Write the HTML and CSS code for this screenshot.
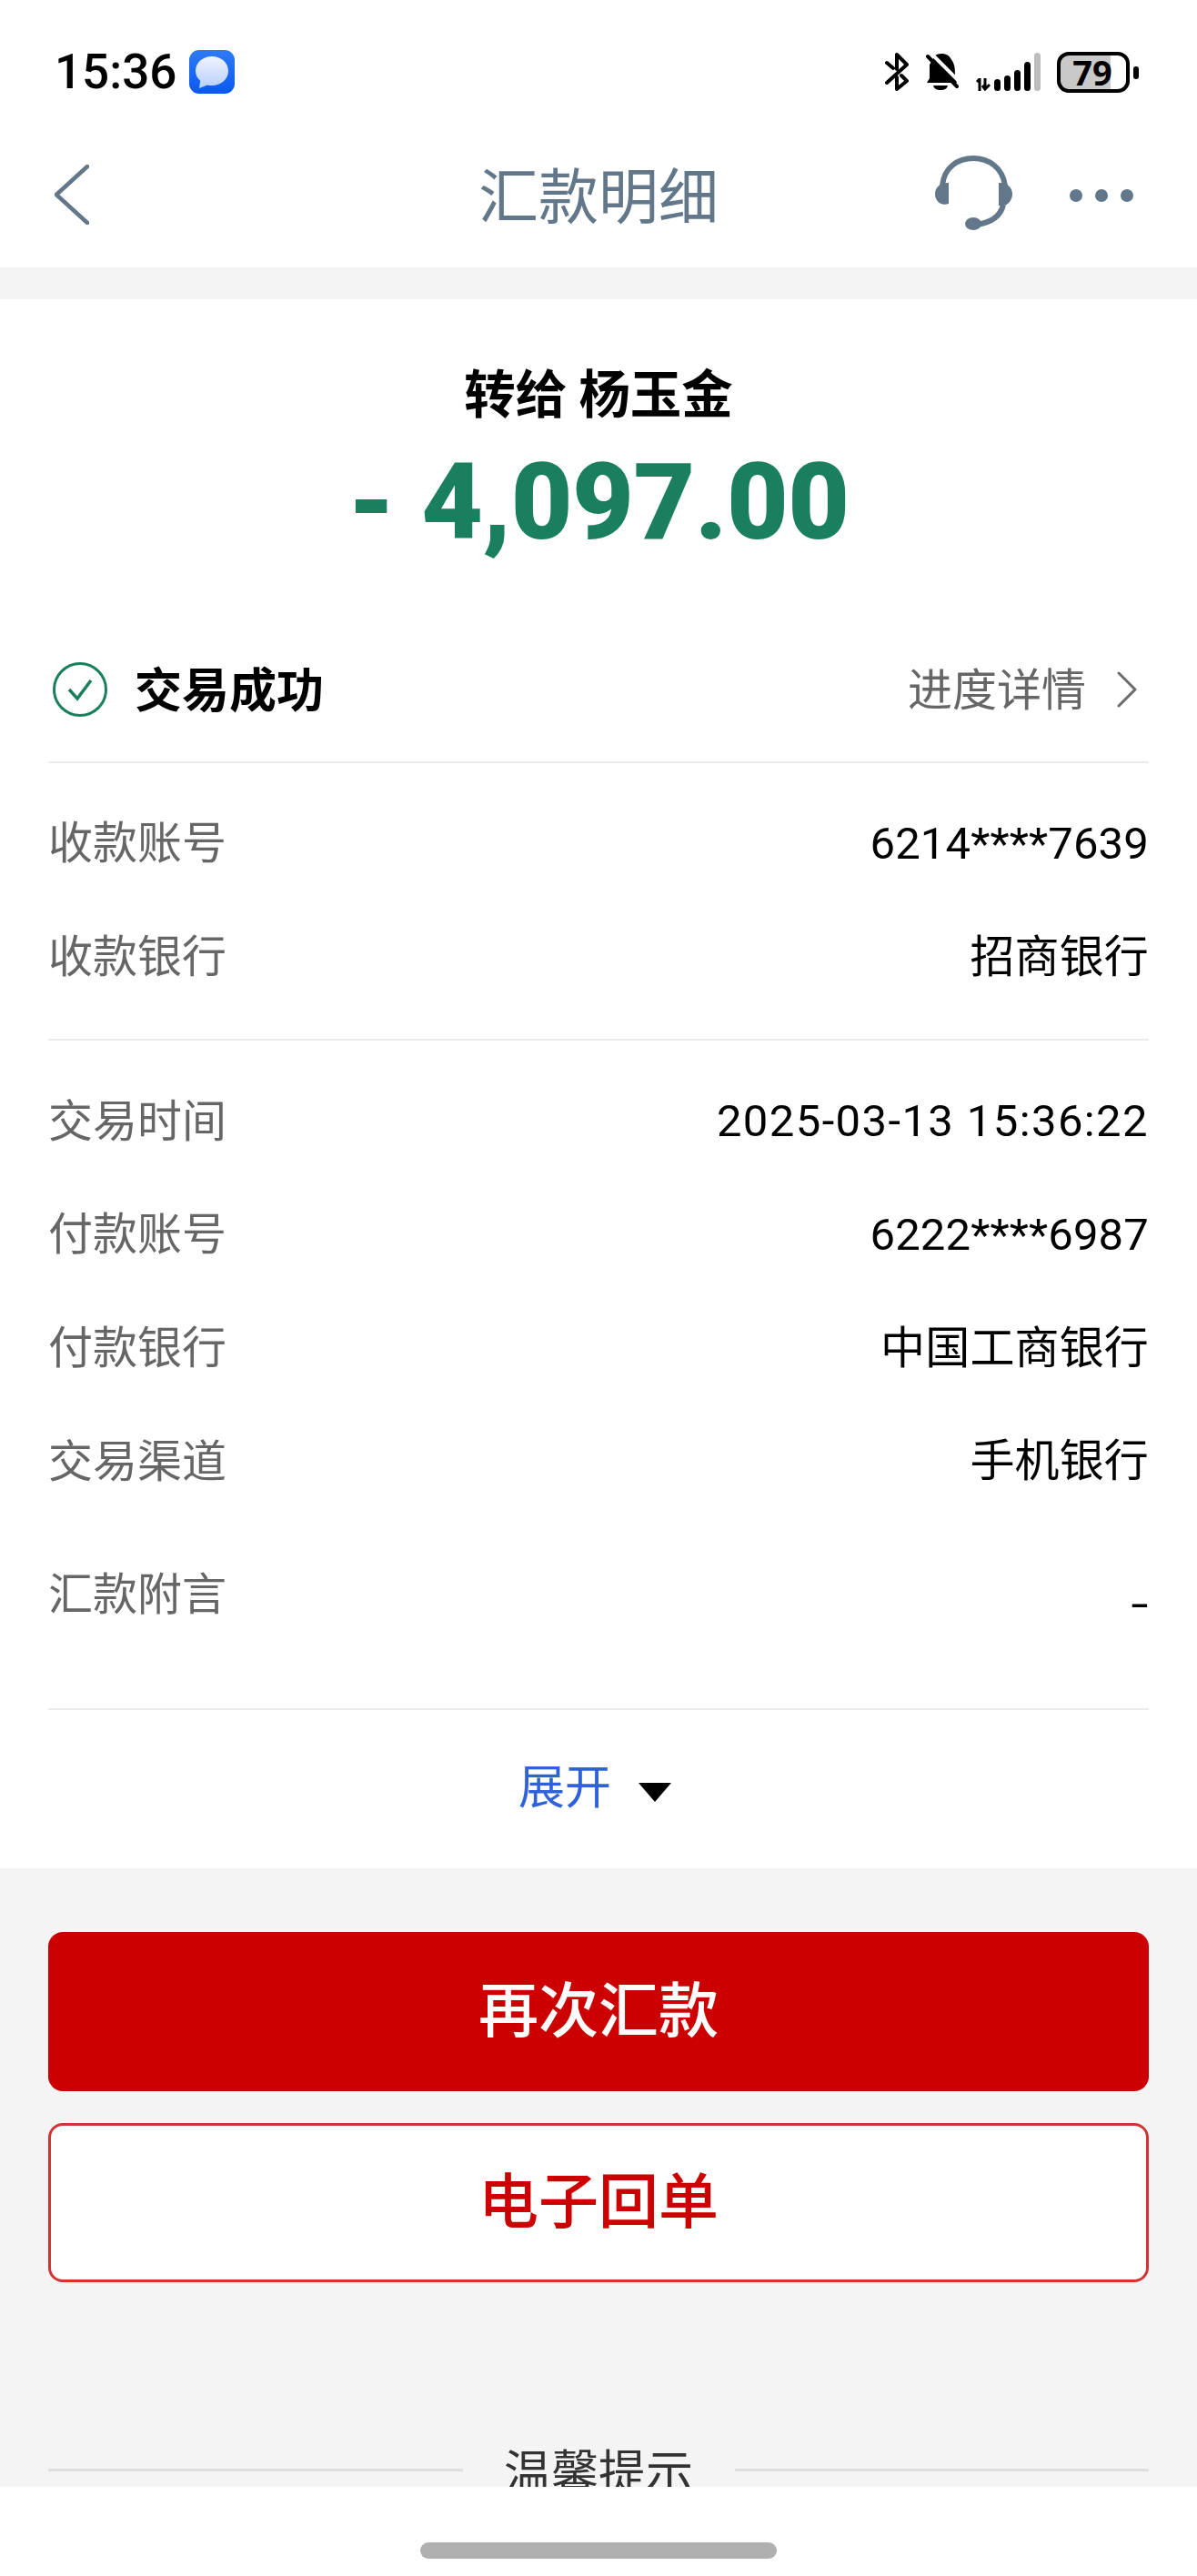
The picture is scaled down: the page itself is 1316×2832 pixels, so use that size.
FILE: index.html
```html
<!DOCTYPE html>
<html lang="zh-CN">
<head>
<meta charset="utf-8">
<title>汇款明细</title>
<link rel="stylesheet" href="styles.css">
</head>
<body>
<div class="phone">
  <header class="top">
    <div class="status">
      <div class="status-left">
        <span class="time">15:36</span>
        <svg class="msg" viewBox="0 0 50 48">
          <defs>
            <linearGradient id="mg" x1="0" y1="0" x2="0" y2="1"><stop offset="0" stop-color="#2f7bf5"/><stop offset="1" stop-color="#0a58f2"/></linearGradient>
            <linearGradient id="mb" x1="0" y1="0" x2="0" y2="1"><stop offset="0" stop-color="#eef3fe"/><stop offset="1" stop-color="#b9d0fb"/></linearGradient>
          </defs>
          <rect width="50" height="48" rx="11" fill="url(#mg)"/>
          <path d="M25 7c10 0 18 6.800 18 16s-8 16-18 16c-1.800 0-3.500-.2-5-.6L11 42l1.200-8.200C8.900 31 7 27.200 7 23 7 13.800 15 7 25 7z" fill="url(#mb)"/>
        </svg>
      </div>
      <div class="status-right">
        <svg class="bt" viewBox="0 0 27 42" fill="none" stroke="#000" stroke-width="4" stroke-linecap="round" stroke-linejoin="round">
          <path d="M2 33 24 13 13 2v16M13 27v13l11-9-6-6M2 11l7 6"/>
        </svg>
        <svg class="bell" viewBox="0 0 37 42">
          <path d="M11 3C15 0 25 0 28 6c4 5 5 10 5 17v4l2 6H2l3-5V13z" fill="#000"/>
          <path d="M9 36h16c-1 4-4 5-8 5s-7-1-8-5z" fill="#000"/>
          <path d="M5 -1 40 34" stroke="#fff" stroke-width="4"/>
          <path d="M3 4 35 37" stroke="#000" stroke-width="4" stroke-linecap="round"/>
        </svg>
        <div class="signal">
          <svg viewBox="0 0 16 14" class="sig-svg"><path d="M1 4 4 1v13" fill="none" stroke="#000" stroke-width="3"/><path d="M10 0v11M7 8l3 4 5-5" fill="none" stroke="#000" stroke-width="3"/></svg>
          <span class="bar b1"></span>
          <span class="bar b2"></span>
          <span class="bar b3"></span>
          <span class="bar b4"></span>
          <span class="bar b5"></span>
        </div>
        <div class="battery"><span class="batt-body">79</span><span class="batt-nub"></span></div>
      </div>
    </div>
    <nav class="nav">
      <svg class="back" viewBox="0 0 38 66" fill="none" stroke="#62788a" stroke-width="4.500" stroke-linecap="round" stroke-linejoin="round"><path d="M36 2 2 33l34 31"/></svg>
      <h1 class="title">汇款明细</h1>
      <div class="nav-actions">
        <svg class="headset" viewBox="0 0 85 82">
          <path d="M8 33C10 13 25 3 42 3s32 10 35 30M75 54c-3 13-14 20-30 22" fill="none" stroke="#62788a" stroke-width="6"/>
          <path d="M15 30v23C6 56 0 50 0 42c0-7 6-13 15-12zM70 30v25c9 2 15-5 15-13 0-7-6-13-15-12z" fill="#62788a"/>
          <ellipse cx="42" cy="75" rx="9" ry="7" fill="#62788a"/>
        </svg>
        <div class="dots"><span class="dot"></span><span class="dot"></span><span class="dot"></span></div>
      </div>
    </nav>
  </header>

  <main class="content">
    <section class="card">
      <div class="hero">
        <div class="payee">转给 杨玉金</div>
        <div class="amount">- 4,097.00</div>
      </div>
      <div class="state">
        <div class="state-left">
          <svg class="ok" viewBox="0 0 60 60" fill="none" stroke="#1a7f5f" stroke-width="3"><circle cx="30" cy="30" r="28.500"/><path d="M18 30l9 10 15-20" stroke-width="3.500"/></svg>
          <span class="state-text">交易成功</span>
        </div>
        <div class="state-right">
          <span class="progress">进度详情</span>
          <svg class="chev" viewBox="0 0 22 40" fill="none" stroke="#6b6b6b" stroke-width="3" stroke-linecap="round" stroke-linejoin="round"><path d="M2 2l18 18L2 38"/></svg>
        </div>
      </div>
      <div class="group">
        <div class="row"><span class="label">收款账号</span><span class="value">6214****7639</span></div>
        <div class="row"><span class="label">收款银行</span><span class="value">招商银行</span></div>
      </div>
      <div class="group">
        <div class="row"><span class="label">交易时间</span><span class="value value-date">2025-03-13 15:36:22</span></div>
        <div class="row"><span class="label">付款账号</span><span class="value">6222****6987</span></div>
        <div class="row"><span class="label">付款银行</span><span class="value">中国工商银行</span></div>
        <div class="row"><span class="label">交易渠道</span><span class="value">手机银行</span></div>
        <div class="row row-note"><span class="label">汇款附言</span><span class="value value-dash">-</span></div>
      </div>
      <div class="expand"><span class="expand-text">展开</span><span class="tri"></span></div>
    </section>

    <section class="actions">
      <button class="btn btn-primary">再次汇款</button>
      <button class="btn btn-outline">电子回单</button>
    </section>

    <section class="tips">
      <span class="tips-line"></span>
      <span class="tips-title">温馨提示</span>
      <span class="tips-line"></span>
    </section>
  </main>

  <footer class="home"><span class="home-bar"></span></footer>
</div>
</body>
</html>
```
FILE: styles.css
```css
* { box-sizing: border-box; }
html, body { margin: 0; padding: 0; background: #fff; }
body { font-family: "Noto Sans CJK SC", "Noto Sans", sans-serif; }

.phone { width: 1316px; height: 2832px; display: flex; flex-direction: column; overflow: hidden; }

.top { height: 294px; background: #fff; flex: none; }
.status { height: 156px; padding: 55px 64px 0 60px; display: flex; justify-content: space-between; align-items: flex-start; }
.status-left { display: flex; align-items: center; gap: 14px; height: 48px; }
.time { font-family: Roboto, sans-serif; font-size: 53px; font-weight: 500; line-height: 48px; color: #000; }
.msg { width: 50px; height: 48px; }
.status-right { display: flex; align-items: flex-start; height: 48px; }
.bt { width: 27px; height: 42px; margin: 3px 17px 0 0; }
.bell { width: 37px; height: 42px; margin: 3px 19px 0 0; }
.signal { display: flex; align-items: flex-end; height: 42px; margin: 3px 18px 0 0; gap: 4px; }
.sig-svg { width: 16px; height: 14px; display: block; }
.bar { width: 7px; background: #000; border-radius: 4px; }
.b1 { height: 13px; }
.b2 { height: 17px; }
.b3 { height: 23px; }
.b4 { height: 32px; }
.b5 { height: 42px; background: #bdbdbd; }
.battery { display: flex; align-items: center; height: 45px; margin-top: 2px; gap: 4px; }
.batt-body { width: 80px; height: 45px; border: 4px solid #000; border-radius: 13px; background: linear-gradient(to right, #c9c9c9 0, #c9c9c9 77%, #fff 77%); font-family: "Open Sans", sans-serif; font-size: 38px; font-weight: 700; line-height: 37px; text-align: center; color: #000; padding-right: 2px; }
.batt-nub { width: 6px; height: 14px; border-radius: 3px; background: #000; }

.nav { height: 138px; display: grid; grid-template-columns: 1fr auto 1fr; align-items: center; padding: 0 65px 22px; }
.back { width: 38px; height: 66px; margin-left: -5px; }
.title { margin: 0 0 6px; font-size: 66px; font-weight: 400; line-height: 88px; color: #62788a; }
.nav-actions { display: flex; align-items: center; justify-content: flex-end; gap: 63px; margin: -4px 5px 0 0; }
.headset { width: 85px; height: 82px; }
.dots { display: flex; gap: 14px; margin-top: 6px; }
.dot { width: 14px; height: 14px; border-radius: 50%; background: #62788a; }

.content { flex: 1; min-height: 0; overflow: hidden; background: #f4f4f4; padding-top: 35px; }

.card { background: #fff; padding: 0 53px; height: 1725px; }
.hero { text-align: center; padding-top: 64px; height: 350px; }
.payee { font-size: 56.500px; font-weight: 700; line-height: 72px; color: #000; }
.amount { font-family: Roboto, sans-serif; font-size: 117px; font-weight: 900; line-height: 130px; letter-spacing: -.4px; color: #1a7f5f; margin-top: 22px; }

.state { height: 160px; display: flex; align-items: center; justify-content: space-between; border-bottom: 2px solid #ebebeb; padding: 0 13px 0 5px; }
.state-left { display: flex; align-items: center; gap: 30px; }
.ok { width: 60px; height: 60px; }
.state-text { font-size: 52px; font-weight: 700; line-height: 70px; color: #000; margin-bottom: 5px; }
.state-right { display: flex; align-items: center; gap: 34px; }
.progress { font-size: 49px; line-height: 64px; color: #666; margin-bottom: 6px; }
.chev { width: 22px; height: 40px; }

.group { padding: 25px 0 29px; border-bottom: 2px solid #ebebeb; }
.row { height: 124.700px; display: flex; justify-content: space-between; align-items: center; padding-bottom: 6px; font-size: 49px; line-height: 64px; }
.label { color: #666; }
.value { color: #000; font-family: Roboto, "Noto Sans CJK SC", sans-serif; letter-spacing: .15px; margin-top: 9px; }
.value-date { letter-spacing: 1.400px; }
.row-note { height: 181px; align-items: flex-start; padding-top: 49px; }
.value-dash { margin-top: 14px; font-size: 70px; font-weight: 300; line-height: 64px; letter-spacing: 0; }

.expand { height: 176px; display: flex; align-items: center; justify-content: center; gap: 30px; padding: 0 8px 14px 0; }
.expand-text { font-size: 51px; color: #2f62d6; }
.tri { width: 0; height: 0; margin-top: 18px; border-left: 18px solid transparent; border-right: 18px solid transparent; border-top: 21px solid #000; }

.actions { padding: 70px 53px 0; display: flex; flex-direction: column; gap: 35px; }
.btn { display: block; width: 100%; height: 175px; border-radius: 16px; font-family: inherit; font-size: 66px; font-weight: 500; line-height: 1; }
.btn-primary { background: #cc0000; border: 0; color: #fff; padding: 0 0 14px; }
.btn-outline { background: #fff; border: 3px solid #d03434; color: #cc0000; padding: 0 0 14px; }

.tips { padding: 206px 53px 0; display: flex; align-items: center; height: 0; }
.tips-line { flex: 1; height: 3px; background: #dedede; }
.tips-title { width: 299px; text-align: center; font-size: 52px; line-height: 70px; color: #333; flex: none; }

.home { height: 98px; flex: none; background: #fff; display: flex; justify-content: center; padding-top: 61px; }
.home-bar { width: 392px; height: 18px; border-radius: 9px; background: #b0b0b0; }
```
